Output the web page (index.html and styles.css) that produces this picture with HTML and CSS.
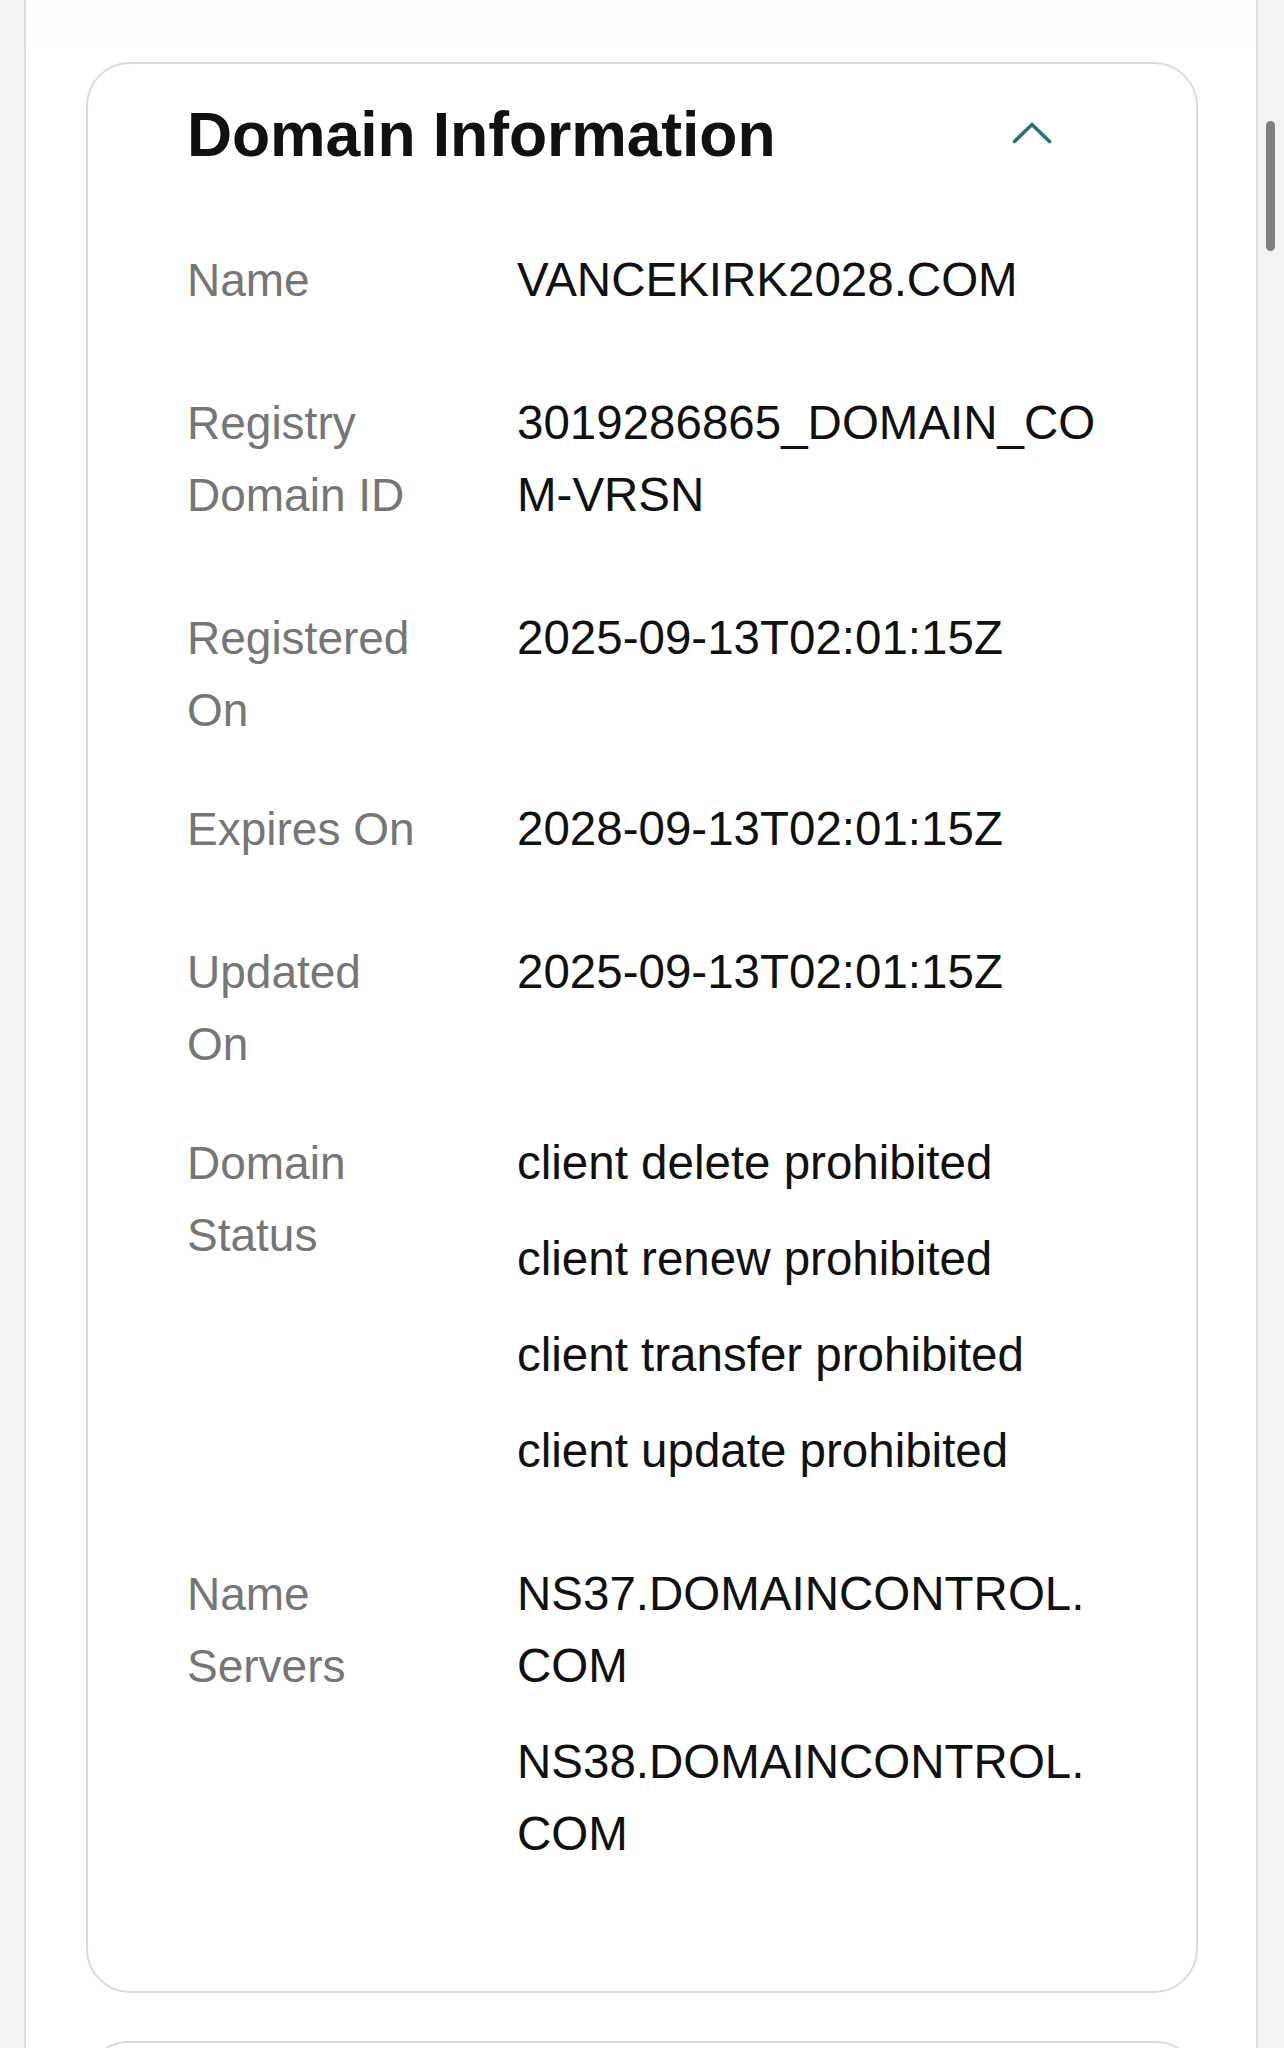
FILE: index.html
```html
<!DOCTYPE html>
<html lang="en">
<head>
<meta charset="utf-8">
<title>Domain Information</title>
<link rel="stylesheet" href="styles.css">
</head>
<body>
<div class="panel">
  <div class="topbar"></div>
  <section class="card">
    <header class="card-head">
      <h2 class="title">Domain Information</h2>
      <svg class="chev" width="40" height="22" viewBox="0 0 40 22" aria-hidden="true">
        <path d="M2.5 19.5 L20 2.5 L37.5 19.5" fill="none" stroke="#2b7171" stroke-width="3.6" stroke-linecap="round" stroke-linejoin="round"/>
      </svg>
    </header>
    <dl class="info">
      <div class="row"><dt class="label">Name</dt><dd class="values"><div class="val">VANCEKIRK2028.COM</div></dd></div>
      <div class="row"><dt class="label">Registry Domain ID</dt><dd class="values"><div class="val">3019286865_DOMAIN_COM-VRSN</div></dd></div>
      <div class="row"><dt class="label">Registered On</dt><dd class="values"><div class="val">2025-09-13T02:01:15Z</div></dd></div>
      <div class="row"><dt class="label">Expires On</dt><dd class="values"><div class="val">2028-09-13T02:01:15Z</div></dd></div>
      <div class="row"><dt class="label">Updated On</dt><dd class="values"><div class="val">2025-09-13T02:01:15Z</div></dd></div>
      <div class="row"><dt class="label">Domain Status</dt><dd class="values">
        <div class="val">client delete prohibited</div>
        <div class="val">client renew prohibited</div>
        <div class="val">client transfer prohibited</div>
        <div class="val">client update prohibited</div>
      </dd></div>
      <div class="row"><dt class="label">Name Servers</dt><dd class="values">
        <div class="val">NS37.DOMAINCONTROL.COM</div>
        <div class="val">NS38.DOMAINCONTROL.COM</div>
      </dd></div>
    </dl>
  </section>
  <section class="card next"></section>
</div>
<div class="scrollbar"></div>
</body>
</html>
```
FILE: styles.css
```css
html, body {
  margin: 0;
  padding: 0;
}
body {
  background: #f2f3f5;
  font-family: "Liberation Sans", Arial, sans-serif;
  height: 2048px;
  overflow: hidden;
}
.panel {
  margin-left: 24px;
  width: 1230px;
  height: 2048px;
  overflow: hidden;
  background: #ffffff;
  border-left: 2px solid #dcdde1;
  border-right: 2px solid #dcdde1;
}
.topbar {
  height: 46px;
  background: #fefefe;
  box-shadow: 0 1px 2px rgba(0, 0, 0, 0.02);
}
.card {
  margin: 16px 58px 0 60px;
  border: 2px solid #d9dadd;
  border-radius: 44px;
  background: #fff;
  padding: 34px 0 50px 99px;
}
.card.next {
  margin-top: 48px;
  height: 80px;
  padding: 0;
}
.card-head {
  display: flex;
  align-items: center;
  justify-content: space-between;
  padding-right: 144px;
}
.title {
  margin: 0;
  font-size: 62.5px;
  line-height: 72px;
  font-weight: 700;
  color: #111111;
  letter-spacing: -0.1px;
}
.chev {
  display: block;
  margin-top: -2px;
}
.info {
  margin: 74px 0 0 0;
  padding: 0;
}
.row {
  display: grid;
  grid-template-columns: 236px 583px;
  column-gap: 94px;
  padding-bottom: 47px;
  align-items: start;
}
.label {
  margin: 0;
  font-size: 46px;
  line-height: 72px;
  color: #767676;
}
.values {
  margin: 0;
}
.val {
  font-size: 47.5px;
  line-height: 72px;
  color: #111111;
  margin-bottom: 24px;
  overflow-wrap: anywhere;
}
.scrollbar {
  position: absolute;
  left: 1266px;
  top: 121px;
  width: 9px;
  height: 130px;
  border-radius: 5px;
  background: #7f7f7f;
}
```
